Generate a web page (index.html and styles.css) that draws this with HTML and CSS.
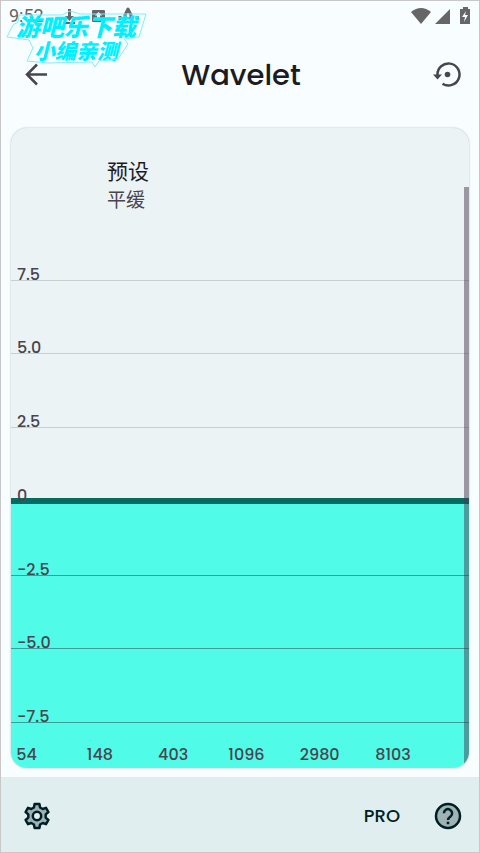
FILE: index.html
```html
<!DOCTYPE html>
<html lang="zh-CN">
<head>
<meta charset="utf-8">
<meta name="viewport" content="width=device-width, initial-scale=1">
<title>Wavelet</title>
<link rel="stylesheet" href="styles.css">
</head>
<body>
<div class="screen">
  <div class="status">
    <span class="clock">9:52</span>
    <svg class="notices" width="80" height="20" viewBox="0 0 80 20" aria-hidden="true">
      <path d="M7 3h3v7h3l-4.500 5-4.500-5h3zM3 16h11v2H3z"/>
      <path fill-rule="evenodd" d="M32 4h11q1 0 1 1v10q0 1-1 1H32q-1 0-1-1V5q0-1 1-1zM37.500 6l3.500 3.500h-2V13h-3V9.500h-2z"/>
      <path class="pulse" d="M59 10v4M64 14V9l3-6 3 6v5M76 10v4"/>
    </svg>
    <svg class="system" width="62" height="20" viewBox="0 0 62 20" aria-hidden="true">
      <path d="M2 6Q12-2 22 6L12 18z"/>
      <path d="M26 18L41 3v15z"/>
      <path d="M54 1h5v2h2v15H51V3h3z"/>
      <path class="bolt" d="M57 5l-4 6h3l-1 5 4-7h-3z"/>
    </svg>
  </div>
  <div class="watermark">
    <svg width="146" height="60" viewBox="1 12 146 60" aria-hidden="true">
      <path d="M19 14h43l8-4 10 3h66l-7 23-15 2 4 5-10 15-19 2-4 6-3-5-44 1-21-2 6-13-4-8-22-3 6-12 5-3z"/>
    </svg>
    <span class="mark-top">游吧乐下载</span>
    <span class="mark-sub">小编亲测</span>
  </div>
  <header class="bar">
    <button class="icon" aria-label="返回">
      <svg width="28" height="28" viewBox="0 0 28 28" aria-hidden="true"><path class="line" d="M26 13.500H6M16 3.500l-10 10 10 10"/></svg>
    </button>
    <h1>Wavelet</h1>
    <button class="icon" aria-label="重置">
      <svg width="28" height="28" viewBox="0 0 28 28" aria-hidden="true">
        <path class="line" d="M4.500 14A11 11 0 1 1 9.500 22.700"/>
        <path d="M0 13.500h9L4.500 18.500z"/><circle cx="14.500" cy="13.500" r="2.800"/>
      </svg>
    </button>
  </header>
  <main class="card">
    <div class="preset"><h2>预设</h2><p>平缓</p></div>
    <div class="row">7.5</div>
    <div class="row">5.0</div>
    <div class="row">2.5</div>
    <div class="row zero">0</div>
    <div class="row filled first">−2.5</div>
    <div class="row filled">−5.0</div>
    <div class="row filled">−7.5</div>
    <div class="axis"><span>54</span><span>148</span><span>403</span><span>1096</span><span>2980</span><span>8103</span></div>
    <div class="thumb"></div>
  </main>
  <footer class="tools">
    <button class="icon" aria-label="设置">
      <svg width="28" height="28" viewBox="0 0 28 28" aria-hidden="true">
        <path class="gear" d="M11.600 2h4.800l.7 3.500 2.600 1.500 3.300-1.200 2.400 4.200-2.700 2.400v3.200l2.700 2.400-2.400 4.200-3.300-1.200-2.600 1.500-.7 3.500h-4.800l-.7-3.500L8.300 21 5 22.200 2.600 18l2.700-2.400v-3.200L2.600 10 5 5.800 8.300 7l2.600-1.500z"/>
        <circle class="hub" cx="14" cy="14" r="4.200"/>
      </svg>
    </button>
    <button class="pro">PRO</button>
    <button class="icon" aria-label="帮助">
      <svg width="28" height="28" viewBox="0 0 28 28" aria-hidden="true">
        <circle class="gear" cx="14" cy="14" r="12"/>
        <path class="mark" d="M9.900 11.200a4.100 4.100 0 1 1 6.700 3.200c-1.600 1.200-2.600 1.900-2.600 3.600"/>
        <path class="dot" d="M12.700 19.700h2.600v2.500h-2.600z"/>
      </svg>
    </button>
  </footer>
</div>
</body>
</html>
```
FILE: styles.css
```css
* { box-sizing: border-box; margin: 0; }
body { background: #f8fdff; font-family: Poppins, Inter, "Noto Sans CJK SC", sans-serif; color: #1c1b1f; }
button { border: 0; padding: 0; background: none; font: inherit; color: inherit; }
svg { display: block; }

.screen { position: relative; min-height: 100vh; display: flex; flex-direction: column; border: 1px solid #c8c8c8; }

.status { display: flex; align-items: center; height: 30px; padding: 0 8px; color: #666; fill: #666; }
.clock { font: 18px/20px Roboto, sans-serif; }
.notices { margin-left: 17px; }
.system { margin-left: auto; }
.pulse { fill: none; stroke: #666; stroke-width: 3; stroke-linejoin: round; }
.bolt { fill: #f8fdff; }

.watermark { position: absolute; top: 12px; left: 0; display: flex; flex-direction: column; color: #00f0ff; font-family: "Noto Sans CJK SC", sans-serif; font-weight: 900; font-style: italic; white-space: nowrap; }
.watermark svg { position: absolute; top: 0; left: 0; fill: none; stroke: #7eeeff; overflow: visible; }
.mark-top { padding-left: 15px; font-size: 24px; line-height: 26px; }
.mark-sub { padding-left: 33px; font-size: 21px; line-height: 22px; }

.bar { display: flex; align-items: center; justify-content: space-between; height: 88px; padding: 0 18px 0 20px; }
.icon { color: #49454f; fill: #49454f; }
.line { fill: none; stroke: #49454f; stroke-width: 2.500; }
h1 { font-size: 29px; line-height: 36px; font-weight: 500; }

.card { position: relative; flex: 1; display: flex; flex-direction: column; margin: 9px 10px; border-radius: 16px; overflow: hidden; background: #ebf3f5; box-shadow: 0 0 2px #aab5b7; }
.preset { height: 79px; padding: 29px 0 0 96px; }
h2 { font-size: 21px; line-height: 30px; font-weight: 400; }
.preset p { font-size: 19px; line-height: 28px; color: #49454f; }
.row { flex: 1 1 12px; display: flex; align-items: flex-end; padding-left: 6px; border-bottom: 1px solid #c6cfd2; font-size: 16px; line-height: 10px; font-weight: 500; color: #49454f; }
.zero { flex-basis: 14px; border-bottom: 6px solid #056b61; line-height: 4px; }
.filled, .axis { background: #50fce8; }
.filled { border-bottom-color: #3b9e98; }
.first { flex-basis: 10px; }
.axis { display: flex; align-items: center; height: 45px; padding-top: 18px; font-size: 16px; line-height: 20px; font-weight: 500; color: #49454f; }
.axis span { flex: 0 0 16%; text-align: center; }
.axis span:first-child { margin-left: -21px; }
.thumb { position: absolute; top: 59px; right: 0; bottom: 0; width: 5px; background: rgba(70, 60, 80, .5); }

.tools { display: flex; align-items: center; height: 75px; padding: 2px 17px 0 22px; background: #e0eef0; color: #001f24; }
.pro { margin-left: auto; margin-right: 34px; font-size: 18px; line-height: 24px; font-weight: 500; }
.gear { fill: #9fb2b4; stroke: #001f24; stroke-width: 2.500; stroke-linejoin: round; }
.hub { fill: #e0eef0; stroke: #001f24; stroke-width: 2.500; }
.mark { fill: none; stroke: #001f24; stroke-width: 2.500; }
.dot { fill: #001f24; }
```
